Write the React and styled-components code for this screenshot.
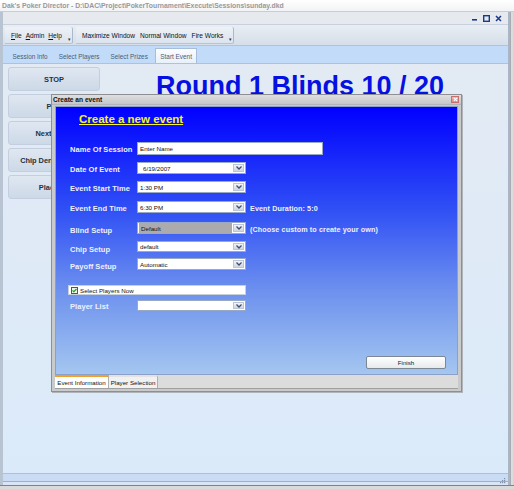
import React from 'react';
import styled, { createGlobalStyle } from 'styled-components';

const GlobalStyle = createGlobalStyle`
  html, body {
    margin: 0;
    padding: 0;
    background: #d6d6d6;
  }
  * {
    box-sizing: border-box;
  }
`;

const Frame = styled.div`
  width: 514px;
  height: 489px;
  display: flex;
  flex-direction: column;
  font-family: "Liberation Sans", Arial, sans-serif;
  overflow: hidden;
  background: #d6d6d6;
`;

const TitleBar = styled.div`
  height: 12px;
  padding-left: 2px;
  display: flex;
  align-items: center;
  background: linear-gradient(#ffffff, #f2f3f5);
  border-bottom: 1px solid #c9cdd3;
  color: #96989d;
  font-size: 6.85px;
  font-weight: bold;
  white-space: nowrap;
`;

const Body = styled.div`
  flex: 1;
  display: flex;
  min-height: 0;
`;

const MainWindow = styled.div`
  width: 510px;
  display: flex;
  flex-direction: column;
  border-left: 3px solid #b9c4d2;
  border-right: 2px solid #a9b6c8;
  background: #e7eaef;
`;

const RightEdge = styled.div`
  width: 4px;
  background: linear-gradient(90deg, #8e949c, #e2e2e2 40%, #d0d0d0);
`;

const MdiBar = styled.div`
  height: 12px;
  display: flex;
  justify-content: flex-end;
  align-items: center;
  gap: 5px;
  padding-right: 6px;
  background: #e6e9ee;
`;

const MdiButton = styled.span`
  width: 7px;
  height: 7px;
  display: flex;
  align-items: center;
  justify-content: center;
`;

const Toolbar = styled.div`
  height: 22px;
  display: flex;
  align-items: stretch;
  gap: 3px;
  padding: 2px 0 1px 2px;
  background: linear-gradient(#e9eef4, #d5dee9);
  border-top: 1px solid #c7d0dc;
  border-bottom: 1px solid #b4c2d4;
`;

const ToolGroup = styled.div`
  position: relative;
  display: flex;
  align-items: center;
  gap: ${props => props.gap}px;
  padding: 0 10px 0 6px;
  background: linear-gradient(#eef2f7, #dbe3ed);
  border-right: 1px solid #aab8ca;
  border-bottom: 1px solid #b6c3d3;
  border-radius: 0 2px 2px 0;
  font-size: 6.6px;
  color: #111;
`;

const Grip = styled.span`
  position: absolute;
  right: 1px;
  bottom: 1px;
  font-size: 5px;
  line-height: 5px;
  color: #333;
`;

const TabRow = styled.div`
  height: 18px;
  display: flex;
  align-items: flex-end;
  padding-left: 4px;
  background: #c2dbf8;
  border-bottom: 1px solid #a9c3e2;
`;

const TopTab = styled.div`
  height: 15px;
  display: flex;
  align-items: center;
  padding: 0 ${props => (props.active ? 4 : 4.5)}px;
  font-size: 6.4px;
  color: #4a5d77;
  background: ${props => (props.active ? 'linear-gradient(#fafcff, #e8f0fa)' : 'transparent')};
  border: 1px solid ${props => (props.active ? '#a7bedb' : 'transparent')};
  border-bottom: none;
  margin-left: ${props => (props.active ? 2 : 0)}px;
`;

const Content = styled.div`
  position: relative;
  flex: 1;
  display: flex;
  background: linear-gradient(#e3eaf4, #dbeafa);
`;

const ButtonColumn = styled.div`
  width: 92px;
  margin-left: 5px;
  padding-top: 3px;
  display: flex;
  flex-direction: column;
  gap: 3px;
`;

const SideButton = styled.div`
  height: 24px;
  display: flex;
  align-items: center;
  justify-content: center;
  border-radius: 3px;
  background: linear-gradient(#dfe7f1, #cdd9e7);
  border: 1px solid #c3cfde;
  font-size: 7.4px;
  font-weight: bold;
  color: #253041;
  white-space: nowrap;
`;

const Stage = styled.div`
  flex: 1;
  display: flex;
  justify-content: center;
  padding-right: 8px;
  padding-top: 7px;
`;

const RoundTitle = styled.h1`
  margin: 0;
  font-size: 27px;
  line-height: 31px;
  font-weight: bold;
  color: #0510e2;
  white-space: nowrap;
`;

const StatusBar = styled.div`
  height: 12px;
  background: linear-gradient(#a6c1e4 0 1px, #c9dcf4 1px 8px, #92b2df 8px 9px, #d7e5f6 9px);
  display: flex;
  justify-content: flex-end;
  align-items: flex-end;
  padding: 0 2px 1px 0;
`;

const BottomEdge = styled.div`
  height: 4px;
  background: linear-gradient(#7f8287 0 1px, #dadada 1px);
`;

/* dialog */

const Dialog = styled.div`
  position: absolute;
  left: 48px;
  top: 30px;
  width: 411px;
  height: 298px;
  display: flex;
  flex-direction: column;
  border: 1px solid #8d8f93;
  background: #c9cacc;
  box-shadow: 1px 1px 0 #b0b4ba;
`;

const DialogTitle = styled.div`
  height: 12px;
  display: flex;
  align-items: center;
  justify-content: space-between;
  padding: 0 2px 0 1px;
  background: linear-gradient(#dedfe1, #c4c6c9);
  font-size: 6.6px;
  font-weight: bold;
  color: #101010;
`;

const CloseBox = styled.span`
  width: 8px;
  height: 7px;
  display: flex;
  align-items: center;
  justify-content: center;
  background: linear-gradient(#f1b6b6, #dc8585);
  border: 1px solid #c86f6f;
`;

const DialogBody = styled.div`
  flex: 1;
  display: flex;
  flex-direction: column;
  padding: 1px 3px 2px 3px;
  border-top: 1px solid #b3b5b8;
`;

const BluePanel = styled.div`
  height: 269px;
  display: flex;
  flex-direction: column;
  padding: 5px 0 0 14px;
  background: linear-gradient(#0000ff 0%, #2f4ff5 38%, #6f93ee 70%, #a4c6f0 100%);
  border: 1px solid #8aa0c8;
`;

const Heading = styled.div`
  margin-left: 9px;
  font-size: 11.5px;
  line-height: 14px;
  font-weight: bold;
  color: #f6f22c;
  text-decoration: underline;
`;

const Form = styled.div`
  display: flex;
  flex-direction: column;
`;

const Row = styled.div`
  display: flex;
  align-items: center;
  margin-top: ${props => props.mt}px;
  height: ${props => props.h}px;
`;

const Label = styled.div`
  width: 67px;
  padding-top: ${props => props.drop}px;
  font-size: 7.5px;
  font-weight: bold;
  letter-spacing: 0.05px;
  color: #eef0ff;
  white-space: nowrap;
`;

const Field = styled.div`
  width: ${props => props.w}px;
  height: 100%;
  display: flex;
  align-items: center;
  background: #ffffff;
  border: 1px solid #98a9c6;
  font-size: 6.2px;
  color: #111;
`;

const FieldValue = styled.div`
  flex: 1;
  height: 100%;
  display: flex;
  align-items: center;
  padding-left: ${props => props.indent}px;
  background: ${props => (props.selected ? '#ababae' : 'transparent')};
  margin: ${props => (props.selected ? '1px' : '0')};
`;

const DropButton = styled.div`
  width: 11px;
  height: calc(100% - 2px);
  margin-right: 1px;
  display: flex;
  align-items: center;
  justify-content: center;
  background: linear-gradient(#f3f4f6, #cfd5de);
  border: 1px solid #bcc6d6;
`;

const Note = styled.div`
  margin-left: 4px;
  padding-top: 2px;
  font-size: 7.2px;
  font-weight: bold;
  letter-spacing: 0.1px;
  color: #eef0ff;
  white-space: nowrap;
`;

const CheckRow = styled.div`
  width: 178px;
  height: 10px;
  margin-top: 15px;
  margin-left: -2px;
  display: flex;
  align-items: center;
  gap: 2px;
  padding-left: 2px;
  background: #ffffff;
  border: 1px solid #c8d0dc;
  font-size: 6.2px;
  color: #111;
`;

const CheckBox = styled.span`
  width: 7px;
  height: 7px;
  display: flex;
  align-items: center;
  justify-content: center;
  border: 1px solid #2f5f86;
  background: #eef4ea;
`;

const Footer = styled.div`
  margin-top: auto;
  display: flex;
  justify-content: flex-end;
  padding: 0 11px 5px 0;
`;

const FinishButton = styled.div`
  width: 80px;
  height: 13px;
  display: flex;
  align-items: center;
  justify-content: center;
  border-radius: 2px;
  background: linear-gradient(#ffffff, #e7e9ec);
  border: 1px solid #7e8794;
  font-size: 6.2px;
  color: #222;
`;

const TabStrip = styled.div`
  height: 14px;
  display: flex;
  align-items: stretch;
  background: #dcdcdc;
  border-bottom: 1px solid #a0a0a0;
`;

const BottomTab = styled.div`
  width: ${props => props.w}px;
  display: flex;
  align-items: center;
  justify-content: center;
  font-size: 6.2px;
  color: #111;
  background: ${props => (props.active ? '#ffffff' : '#f1f1f1')};
  border-top: 2px solid ${props => (props.active ? '#f0a02c' : '#e2e2e2')};
  border-right: 1px solid #b0b0b0;
`;

const Chevron = () => (
  <svg width="6" height="4" viewBox="0 0 6 4">
    <polyline points="0.5,0.5 3,3 5.5,0.5" fill="none" stroke="#3c4f78" strokeWidth="1.3" />
  </svg>
);

const rows = [
  { label: 'Name Of Session', value: 'Enter Name', mt: 16, h: 13, w: 186, combo: false, drop: 1 },
  { label: 'Date Of Event', value: '6/19/2007', mt: 7, h: 12, w: 109, combo: true, indent: 5, drop: 2 },
  { label: 'Event Start Time', value: '1:30 PM', mt: 7, h: 12, w: 109, combo: true, drop: 2 },
  { label: 'Event End Time', value: '6:30 PM', mt: 8, h: 12, w: 109, combo: true, drop: 2, note: 'Event Duration: 5:0' },
  { label: 'Blind Setup', value: 'Default', mt: 9, h: 12, w: 109, combo: true, selected: true, drop: 4, note: '(Choose custom to create your own)' },
  { label: 'Chip Setup', value: 'default', mt: 7, h: 11, w: 109, combo: true, drop: 5 },
  { label: 'Payoff Setup', value: 'Automatic', mt: 6, h: 12, w: 109, combo: true, drop: 5 },
];

function App() {
  return (
    <>
      <GlobalStyle />
      <Frame>
        <TitleBar>
          Dak's Poker Director - D:\DAC\Project\PokerTournament\Execute\Sessions\sunday.dkd
        </TitleBar>
        <Body>
          <MainWindow>
            <MdiBar>
              <MdiButton>
                <svg width="6" height="6" viewBox="0 0 6 6"><rect x="0" y="4" width="5" height="1.6" fill="#1b3a8e" /></svg>
              </MdiButton>
              <MdiButton>
                <svg width="7" height="7" viewBox="0 0 7 7"><rect x="0.7" y="0.7" width="5.6" height="5.6" fill="none" stroke="#1b3a8e" strokeWidth="1.4" /></svg>
              </MdiButton>
              <MdiButton>
                <svg width="7" height="7" viewBox="0 0 7 7"><path d="M1 1 L6 6 M6 1 L1 6" stroke="#1b3a8e" strokeWidth="1.5" /></svg>
              </MdiButton>
            </MdiBar>
            <Toolbar>
              <ToolGroup gap={4}>
                <span><u>F</u>ile</span>
                <span><u>A</u>dmin</span>
                <span><u>H</u>elp</span>
                <Grip>▾</Grip>
              </ToolGroup>
              <ToolGroup gap={5}>
                <span>Maximize Window</span>
                <span>Normal Window</span>
                <span>Fire Works</span>
                <Grip>▾</Grip>
              </ToolGroup>
            </Toolbar>
            <TabRow>
              <TopTab>Session Info</TopTab>
              <TopTab>Select Players</TopTab>
              <TopTab>Select Prizes</TopTab>
              <TopTab active>Start Event</TopTab>
            </TabRow>
            <Content>
              <ButtonColumn>
                <SideButton>STOP</SideButton>
                <SideButton>Play</SideButton>
                <SideButton>Next Level</SideButton>
                <SideButton>Chip Denomination</SideButton>
                <SideButton>Placings</SideButton>
              </ButtonColumn>
              <Stage>
                <RoundTitle>Round 1 Blinds 10 / 20</RoundTitle>
              </Stage>

              <Dialog>
                <DialogTitle>
                  Create an event
                  <CloseBox>
                    <svg width="5" height="5" viewBox="0 0 5 5"><path d="M0.8 0.8 L4.2 4.2 M4.2 0.8 L0.8 4.2" stroke="#ffffff" strokeWidth="1.1" /></svg>
                  </CloseBox>
                </DialogTitle>
                <DialogBody>
                  <BluePanel>
                    <Heading>Create a new event</Heading>
                    <Form>
                      {rows.map(row => (
                        <Row key={row.label} mt={row.mt} h={row.h}>
                          <Label drop={row.drop}>{row.label}</Label>
                          <Field w={row.w}>
                            <FieldValue indent={row.indent || 2} selected={row.selected}>{row.value}</FieldValue>
                            {row.combo && <DropButton><Chevron /></DropButton>}
                          </Field>
                          {row.note && <Note>{row.note}</Note>}
                        </Row>
                      ))}
                      <CheckRow>
                        <CheckBox>
                          <svg width="6" height="5" viewBox="0 0 6 5"><polyline points="0.6,2.4 2.2,4 5.4,0.7" fill="none" stroke="#1f9a1f" strokeWidth="1.3" /></svg>
                        </CheckBox>
                        Select Players Now
                      </CheckRow>
                      <Row mt={5} h={11}>
                        <Label drop={2}>Player List</Label>
                        <Field w={109}>
                          <FieldValue indent={2} />
                          <DropButton><Chevron /></DropButton>
                        </Field>
                      </Row>
                    </Form>
                    <Footer>
                      <FinishButton>Finish</FinishButton>
                    </Footer>
                  </BluePanel>
                  <TabStrip>
                    <BottomTab w={54} active>Event Information</BottomTab>
                    <BottomTab w={49}>Player Selection</BottomTab>
                  </TabStrip>
                </DialogBody>
              </Dialog>
            </Content>
            <StatusBar>
              <svg width="6" height="6" viewBox="0 0 6 6">
                <rect x="4" y="0" width="1.2" height="1.2" fill="#7d8fa8" />
                <rect x="2" y="2" width="1.2" height="1.2" fill="#7d8fa8" />
                <rect x="4" y="2" width="1.2" height="1.2" fill="#7d8fa8" />
                <rect x="0" y="4" width="1.2" height="1.2" fill="#7d8fa8" />
                <rect x="2" y="4" width="1.2" height="1.2" fill="#7d8fa8" />
                <rect x="4" y="4" width="1.2" height="1.2" fill="#7d8fa8" />
              </svg>
            </StatusBar>
          </MainWindow>
          <RightEdge />
        </Body>
        <BottomEdge />
      </Frame>
    </>
  );
}

export default App;
